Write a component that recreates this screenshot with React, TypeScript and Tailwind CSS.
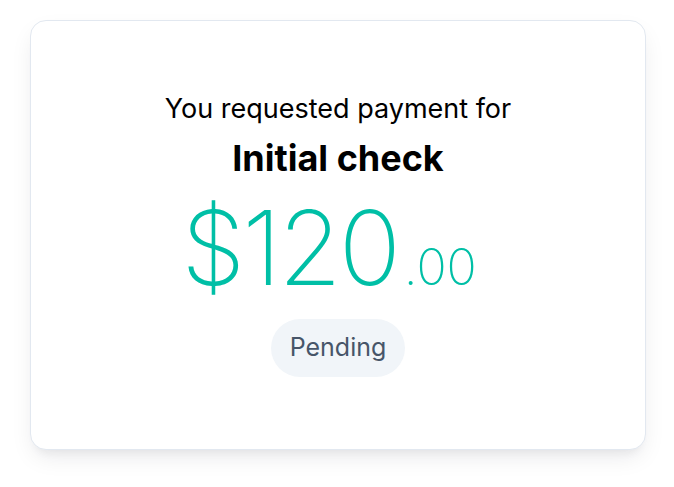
import React from "react";

export default function App() {
  return (
    <div className="w-[674px] h-[487px] bg-white pt-[20px] pl-[30px]" style={{ fontFamily: "Inter, 'Noto Sans', sans-serif" }}>
      <div className="w-[616px] h-[430px] rounded-2xl border border-[#e2e8f0] bg-white shadow-[0_10px_25px_-5px_rgba(15,23,42,0.10),0_8px_10px_-6px_rgba(15,23,42,0.06)] flex flex-col items-center pt-[71px]">
        <div className="text-[27px] leading-[34px] text-black">You requested payment for</div>
        <div className="mt-[12px] text-[36px] leading-[40px] font-bold text-black">Initial check</div>
        <div className="mt-[15px] mr-[18px] flex items-baseline text-[#00bfa6] font-extralight">
          <span className="text-[103px] leading-[110px] tracking-[-0.03em]">$120</span>
          <span className="text-[50px] leading-[56px] ml-[6px]">.00</span>
        </div>
        <div className="mt-[16px] h-[58px] px-[19px] rounded-full bg-[#f1f5f9] flex items-center text-[25px] text-[#475569]">
          Pending
        </div>
      </div>
    </div>
  );
}
